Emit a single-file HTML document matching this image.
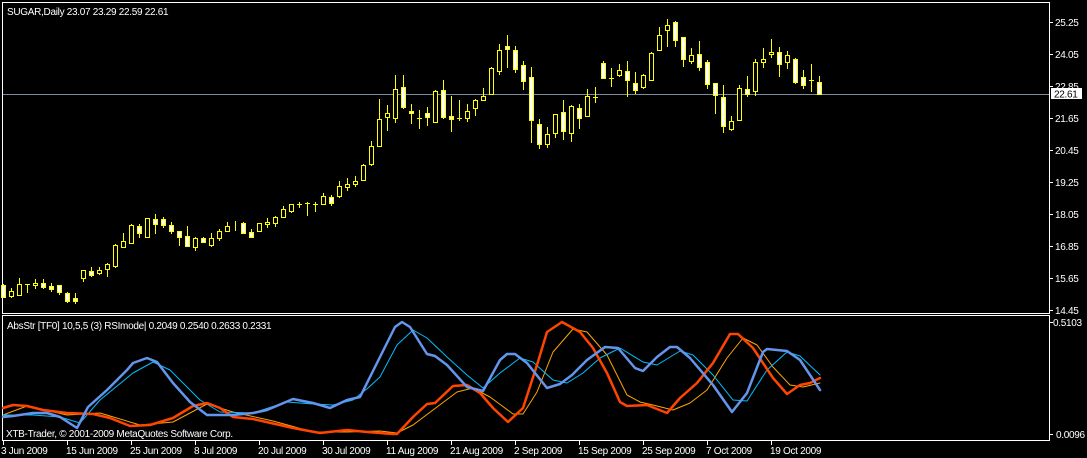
<!DOCTYPE html>
<html><head><meta charset="utf-8"><style>
html,body{margin:0;padding:0;background:#000;}
svg{display:block;}
text{font-family:"Liberation Sans",sans-serif;font-size:10px;letter-spacing:-0.3px;fill:#fff;}
</style></head><body>
<svg width="1087" height="458" viewBox="0 0 1087 458" xmlns="http://www.w3.org/2000/svg">
<rect width="1087" height="458" fill="#000"/>
<rect x="2.5" y="2.5" width="1047" height="311" fill="none" stroke="#fff"/>
<rect x="2.5" y="315.5" width="1047" height="125" fill="none" stroke="#fff"/>
<line x1="3" y1="94.5" x2="1049" y2="94.5" stroke="#7f8c9c"/>
<text x="7" y="15">SUGAR,Daily  23.07 23.29 22.59 22.61</text>
<text x="7" y="329">AbsStr [TF0] 10,5,5 (3) RSImode| 0.2049 0.2540 0.2633 0.2331</text>
<text x="6" y="437">XTB-Trader, © 2001-2009 MetaQuotes Software Corp.</text>
<g stroke="#fff">
<path d="M1050 22.5h3M1050 54.5h3M1050 86.5h3M1050 118.5h3M1050 150.5h3M1050 182.5h3M1050 214.5h3M1050 246.5h3M1050 278.5h3M1050 310.5h3M1050 322.5h3M1050 434.5h3"/>
<path d="M3.5 441v4M67.5 441v4M131.5 441v4M195.5 441v4M259.5 441v4M323.5 441v4M387.5 441v4M451.5 441v4M515.5 441v4M579.5 441v4M643.5 441v4M707.5 441v4M771.5 441v4"/>
</g>
<g>
<text x="1055" y="26">25.25</text><text x="1055" y="58">24.05</text><text x="1055" y="90">22.85</text>
<text x="1055" y="122">21.65</text><text x="1055" y="154">20.45</text><text x="1055" y="186">19.25</text>
<text x="1055" y="218">18.05</text><text x="1055" y="250">16.85</text><text x="1055" y="282">15.65</text>
<text x="1055" y="314">14.45</text><text x="1053" y="326">0.5103</text><text x="1056" y="438">0.0096</text>
</g>
<rect x="1051" y="88" width="31" height="11" fill="#fff"/>
<text x="1054" y="97.5" style="fill:#000">22.61</text>
<g>
<text x="1" y="454">3 Jun 2009</text><text x="66" y="454">15 Jun 2009</text><text x="130" y="454">25 Jun 2009</text>
<text x="194" y="454">8 Jul 2009</text><text x="258" y="454">20 Jul 2009</text><text x="322" y="454">30 Jul 2009</text>
<text x="386" y="454">11 Aug 2009</text><text x="450" y="454">21 Aug 2009</text><text x="514" y="454">2 Sep 2009</text>
<text x="578" y="454">15 Sep 2009</text><text x="642" y="454">25 Sep 2009</text><text x="706" y="454">7 Oct 2009</text>
<text x="770" y="454">19 Oct 2009</text>
</g>
<g transform="translate(-1,0)" stroke="#ffff00" stroke-width="1">
<path fill="none" d="M4.5 284V298M12.5 288V298M20.5 278V296M28.5 284V293M36.5 279V289M44.5 279V289M52.5 283V292M60.5 285V295M68.5 292V303M76.5 293V304M84.5 270V282M92.5 267V277M100.5 267V275M108.5 263V277M116.5 244V268M124.5 233V248M132.5 224V244M140.5 224V238M148.5 218V238M156.5 214V234M164.5 217V228M172.5 222V234M180.5 231V246M188.5 226V247M196.5 237V251M204.5 237V243M212.5 233V247M220.5 229V241M228.5 222V232M236.5 221V231M244.5 222V234M252.5 229V238M260.5 223V232M268.5 218V228M276.5 216V227M284.5 206V218M292.5 204V213M300.5 202V208M308.5 202V216M316.5 202V212M324.5 193V205M332.5 195V206M340.5 181V198M348.5 178V191M356.5 176V187M364.5 164V181M372.5 141V166M380.5 99V147M388.5 105V131M396.5 75V123M404.5 75V109M412.5 104V124M420.5 110V129M428.5 107V126M436.5 90V123M444.5 80V119M452.5 96V132M460.5 100V121M468.5 104V122M476.5 99V116M484.5 88V100M492.5 67V95M500.5 44V75M508.5 35V68M516.5 46V73M524.5 61V90M532.5 67V143M540.5 119V149M548.5 127V148M556.5 114V138M564.5 100V140M572.5 105V142M580.5 104V129M588.5 89V117M596.5 87V103M604.5 61V79M612.5 68V87M620.5 64V77M628.5 61V97M636.5 72V94M644.5 74V89M652.5 52V81M660.5 27V51M668.5 19V47M676.5 21V47M684.5 37V67M692.5 48V64M700.5 41V71M708.5 60V89M716.5 83V114M724.5 85V133M732.5 116V131M740.5 85V121M748.5 76V97M756.5 59V96M764.5 48V68M772.5 39V58M780.5 47V77M788.5 51V69M796.5 58V84M804.5 70V89M812.5 64V92M820.5 76V95
M26 284.5h5M298 204.5h5M306 203.5h5M314 204.5h5M418 118.5h5M458 118.5h5M594 97.5h5M610 78.5h5M810 80.5h5"/>
<g fill="#000">
<rect x="10.5" y="291.5" width="4" height="5"/><rect x="18.5" y="284.5" width="4" height="11"/><rect x="34.5" y="283.5" width="4" height="2"/>
<rect x="82.5" y="270.5" width="4" height="8"/><rect x="98.5" y="270.5" width="4" height="3"/><rect x="106.5" y="264.5" width="4" height="5"/>
<rect x="114.5" y="245.5" width="4" height="21"/><rect x="122.5" y="241.5" width="4" height="6"/><rect x="130.5" y="225.5" width="4" height="18"/>
<rect x="146.5" y="218.5" width="4" height="19"/><rect x="194.5" y="238.5" width="4" height="9"/><rect x="210.5" y="238.5" width="4" height="7"/>
<rect x="218.5" y="231.5" width="4" height="7"/><rect x="226.5" y="226.5" width="4" height="5"/><rect x="258.5" y="223.5" width="4" height="8"/>
<rect x="266.5" y="222.5" width="4" height="2"/><rect x="274.5" y="217.5" width="4" height="6"/><rect x="282.5" y="209.5" width="4" height="8"/>
<rect x="290.5" y="204.5" width="4" height="7"/><rect x="322.5" y="196.5" width="4" height="8"/><rect x="338.5" y="186.5" width="4" height="10"/>
<rect x="346.5" y="184.5" width="4" height="3"/><rect x="354.5" y="181.5" width="4" height="3"/><rect x="362.5" y="165.5" width="4" height="15"/>
<rect x="370.5" y="146.5" width="4" height="18"/><rect x="378.5" y="119.5" width="4" height="27"/><rect x="386.5" y="113.5" width="4" height="4"/>
<rect x="394.5" y="89.5" width="4" height="29"/><rect x="434.5" y="91.5" width="4" height="31"/><rect x="466.5" y="111.5" width="4" height="7"/>
<rect x="474.5" y="100.5" width="4" height="8"/><rect x="482.5" y="96.5" width="4" height="4"/><rect x="490.5" y="68.5" width="4" height="26"/>
<rect x="498.5" y="50.5" width="4" height="21"/><rect x="546.5" y="134.5" width="4" height="10"/><rect x="554.5" y="114.5" width="4" height="19"/>
<rect x="570.5" y="106.5" width="4" height="27"/><rect x="586.5" y="96.5" width="4" height="20"/><rect x="618.5" y="70.5" width="4" height="5"/>
<rect x="642.5" y="75.5" width="4" height="12"/><rect x="650.5" y="53.5" width="4" height="27"/><rect x="658.5" y="35.5" width="4" height="15"/>
<rect x="666.5" y="25.5" width="4" height="5"/><rect x="690.5" y="55.5" width="4" height="6"/><rect x="730.5" y="121.5" width="4" height="8"/>
<rect x="738.5" y="88.5" width="4" height="32"/><rect x="754.5" y="62.5" width="4" height="29"/><rect x="762.5" y="59.5" width="4" height="3"/>
<rect x="770.5" y="52.5" width="4" height="2"/><rect x="786.5" y="55.5" width="4" height="7"/>
</g>
<g fill="#fff">
<rect x="2.5" y="285.5" width="4" height="12"/><rect x="42.5" y="283.5" width="4" height="4"/><rect x="50.5" y="286.5" width="4" height="3"/>
<rect x="58.5" y="285.5" width="4" height="7"/><rect x="66.5" y="293.5" width="4" height="8"/><rect x="74.5" y="298.5" width="4" height="3"/>
<rect x="90.5" y="271.5" width="4" height="4"/><rect x="138.5" y="226.5" width="4" height="7"/><rect x="154.5" y="219.5" width="4" height="5"/>
<rect x="162.5" y="219.5" width="4" height="6"/><rect x="170.5" y="225.5" width="4" height="6"/><rect x="178.5" y="231.5" width="4" height="6"/>
<rect x="186.5" y="236.5" width="4" height="10"/><rect x="202.5" y="238.5" width="4" height="4"/><rect x="242.5" y="223.5" width="4" height="10"/>
<rect x="250.5" y="232.5" width="4" height="5"/><rect x="330.5" y="197.5" width="4" height="6"/><rect x="402.5" y="87.5" width="4" height="20"/>
<rect x="410.5" y="111.5" width="4" height="2"/><rect x="426.5" y="113.5" width="4" height="4"/><rect x="442.5" y="90.5" width="4" height="27"/>
<rect x="450.5" y="116.5" width="4" height="3"/><rect x="506.5" y="46.5" width="4" height="3"/><rect x="514.5" y="50.5" width="4" height="19"/>
<rect x="522.5" y="65.5" width="4" height="16"/><rect x="530.5" y="77.5" width="4" height="43"/><rect x="538.5" y="124.5" width="4" height="20"/>
<rect x="562.5" y="112.5" width="4" height="19"/><rect x="578.5" y="108.5" width="4" height="10"/><rect x="602.5" y="63.5" width="4" height="15"/>
<rect x="626.5" y="71.5" width="4" height="9"/><rect x="634.5" y="83.5" width="4" height="7"/><rect x="674.5" y="22.5" width="4" height="18"/>
<rect x="682.5" y="37.5" width="4" height="22"/><rect x="698.5" y="54.5" width="4" height="13"/><rect x="706.5" y="62.5" width="4" height="22"/>
<rect x="714.5" y="83.5" width="4" height="12"/><rect x="722.5" y="97.5" width="4" height="29"/><rect x="746.5" y="89.5" width="4" height="5"/>
<rect x="778.5" y="52.5" width="4" height="12"/><rect x="794.5" y="59.5" width="4" height="23"/><rect x="802.5" y="77.5" width="4" height="8"/>
<rect x="818.5" y="82.5" width="4" height="12"/>
</g>
</g>
<g fill="none" stroke-linejoin="round" stroke-linecap="round">
<polyline stroke="#ffa500" stroke-width="1" points="3,415 27,406 67,415 100,413 140,425 173,422 207,404 233,412 273,421 313,432 347,432 380,431 397,433 413,425 433,410 457,392 473,388 490,397 513,414 523,414 537,392 553,352 573,329 587,332 607,355 627,395 640,402 657,406 673,410 690,403 707,390 727,358 743,338 757,345 773,367 790,385 803,387 820,383"/>
<polyline stroke="#00bfff" stroke-width="1" points="3,415 33,415 60,417 80,423 100,400 133,373 153,362 170,370 200,400 220,412 253,413 287,402 313,404 333,405 353,400 368,388 380,377 397,345 413,330 427,338 447,357 467,375 483,388 500,373 520,358 533,362 553,380 567,383 583,373 600,358 620,348 643,362 657,365 680,351 693,355 713,375 733,400 747,401 767,370 787,352 800,356 820,375"/>
<polyline stroke="#ff4500" stroke-width="2.5" points="3,408 13,405 27,406 43,410 67,413 93,414 110,418 130,426 150,425 173,418 193,406 207,403 220,408 233,417 253,419 293,428 320,433 347,430 367,432 393,434 397,434 413,417 427,404 435,403 453,386 467,385 480,393 493,408 508,422 523,408 537,365 547,332 562,322 580,332 593,348 607,373 620,402 627,406 647,405 667,413 680,398 697,383 713,363 730,334 738,334 753,348 773,378 787,394 800,385 810,383 820,378"/>
<polyline stroke="#6495ed" stroke-width="2.5" points="3,417 13,416 33,413 47,413 60,417 77,428 88,407 107,390 127,370 133,363 147,358 157,362 173,383 190,402 207,415 233,415 253,413 267,410 293,399 313,403 330,408 347,400 360,397 380,357 395,327 402,322 410,327 427,354 435,356 447,365 467,387 483,391 500,360 507,354 515,354 527,363 547,388 560,384 572,375 587,360 605,347 618,348 635,368 643,371 657,357 670,347 677,347 690,358 713,385 732,412 747,393 763,352 767,349 787,351 800,360 820,390"/>
</g>
</svg>
</body></html>
